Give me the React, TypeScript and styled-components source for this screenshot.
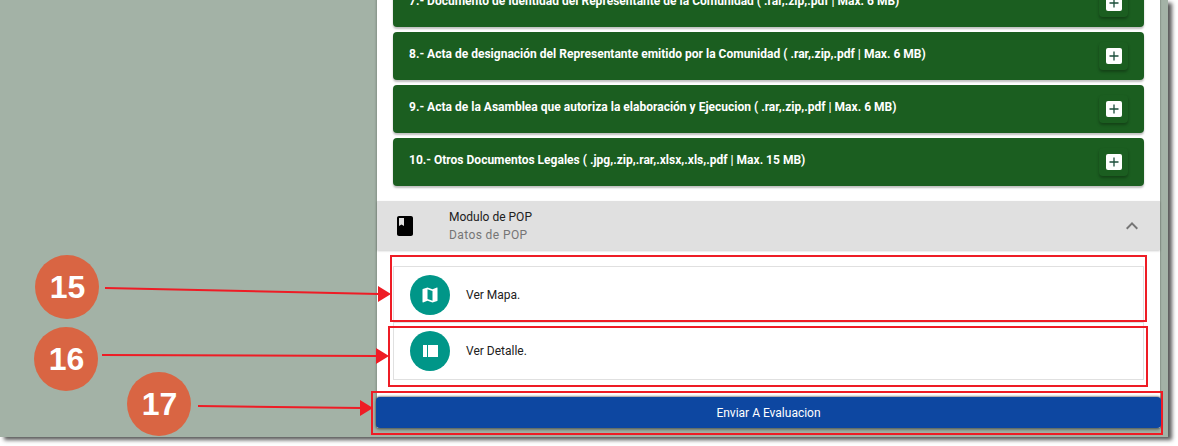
import React from 'react'
import styled, { createGlobalStyle } from 'styled-components'

const GlobalStyle = createGlobalStyle`
  html, body {
    margin: 0;
    padding: 0;
    background: #fff;
    overflow: hidden;
  }
  body { min-height: 446px; }
  * { box-sizing: border-box; }
`

const Shot = styled.div`
  position: relative;
  width: 1168px;
  height: 437px;
  padding: 0 8px 0 377px;
  background: #a3b2a6;
  box-shadow: 4px 3px 4px rgba(0, 0, 0, 0.65);
  overflow: hidden;
  font-family: Roboto, sans-serif;
`

const Panel = styled.div`
  width: 783px;
  background: #fff;
  box-shadow: -1px 0 2px rgba(0, 0, 0, 0.2), 1px 0 1px rgba(0, 0, 0, 0.12);
`

const Cards = styled.div`
  display: flex;
  flex-direction: column;
  gap: 5px;
  margin-top: -21px;
  padding: 0 16px 15px;
`

const Card = styled.div`
  display: flex;
  align-items: center;
  justify-content: space-between;
  height: 48px;
  padding: 0 16px;
  background: #1b5e20;
  border-radius: 4px;
  box-shadow: 0 2px 2px rgba(0, 0, 0, 0.25);
`

const CardTitle = styled.span`
  margin-top: -5px;
  color: #fff;
  font-size: 12px;
  font-weight: 700;
  line-height: 16px;
  letter-spacing: 0.01px;
`

const PlusButton = styled.button`
  display: flex;
  align-items: center;
  justify-content: center;
  width: 29px;
  height: 28px;
  padding: 0;
  border: 0;
  border-radius: 4px;
  background: #1b5e20;
  box-shadow: 0 2px 3px rgba(0, 0, 0, 0.3);
`

const PlusBox = styled.span`
  display: flex;
  align-items: center;
  justify-content: center;
  width: 16px;
  height: 16px;
  background: #fff;
  border-radius: 2px;
`

const ModuleHeader = styled.div`
  display: flex;
  align-items: center;
  height: 49px;
  padding: 0 16px;
  background: #e0e0e0;
  box-shadow: 0 1px 2px rgba(0, 0, 0, 0.2);
`

const ModuleIcon = styled.svg`
  flex: none;
  width: 24px;
  height: 24px;
  margin-right: 32px;
  fill: #000;
`

const ModuleText = styled.div`
  flex: 1;
  display: flex;
  flex-direction: column;
  gap: 3px;
`

const ModuleTitle = styled.span`
  margin-top: 1px;
  color: #212121;
  font-size: 12px;
  line-height: 16px;
`

const ModuleSub = styled.span`
  margin-top: -1px;
  color: #757575;
  font-size: 12px;
  line-height: 16px;
  letter-spacing: 0.4px;
`

const Chevron = styled.svg`
  flex: none;
  width: 24px;
  height: 24px;
  fill: #757575;
`

const List = styled.div`
  padding: 16px 16px 17px;
`

const Item = styled.div`
  display: flex;
  align-items: center;
  gap: 16px;
  height: 57px;
  padding: 0 16px;
  border: 1px solid #e0e0e0;
  & + & { margin-top: -1px; height: 58px; }
`

const ItemIcon = styled.span`
  display: flex;
  align-items: center;
  justify-content: center;
  width: 40px;
  height: 40px;
  border-radius: 50%;
  background: #009688;
`

const ItemLabel = styled.span`
  color: #212121;
  font-size: 12px;
`

const SendButton = styled.button`
  display: block;
  width: 785px;
  height: 31px;
  margin-left: -1px;
  border: 0;
  border-radius: 4px;
  background: #0d47a1;
  color: #fff;
  font-family: Roboto, sans-serif;
  font-size: 12px;
  font-weight: 400;
  box-shadow: 0 -1px 2px rgba(0, 0, 0, 0.4), 0 2px 3px rgba(0, 0, 0, 0.35);
`

const Marks = styled.svg`
  position: absolute;
  left: 0;
  top: 0;
  width: 1168px;
  height: 437px;
  pointer-events: none;
`

const Badge = styled.div<{ $x: number; $y: number }>`
  position: absolute;
  left: ${p => p.$x}px;
  top: ${p => p.$y}px;
  display: flex;
  align-items: center;
  justify-content: center;
  width: 64px;
  height: 64px;
  padding-left: 1px;
  border-radius: 50%;
  background: #d96543;
  color: #fff;
  font-family: 'Liberation Sans', Arial, sans-serif;
  font-size: 32px;
  font-weight: 700;
`

const documents = [
  '7.- Documento de Identidad del Representante de la Comunidad ( .rar,.zip,.pdf | Max. 6 MB)',
  '8.- Acta de designación del Representante emitido por la Comunidad ( .rar,.zip,.pdf | Max. 6 MB)',
  '9.- Acta de la Asamblea que autoriza la elaboración y Ejecucion ( .rar,.zip,.pdf | Max. 6 MB)',
  '10.- Otros Documentos Legales ( .jpg,.zip,.rar,.xlsx,.xls,.pdf | Max. 15 MB)',
]

const frames = [
  { x: 391, y: 256, w: 755, h: 65 },
  { x: 389, y: 327, w: 758, h: 59 },
  { x: 372, y: 392, w: 790, h: 42 },
]

const arrows = [
  { line: '105,288 379,294', head: '378,286 391,294 378,302' },
  { line: '102,355 377,356', head: '376,348 389,356 376,364' },
  { line: '198,406 361,408', head: '360,400 373,408 360,416' },
]

const App = () => {
  return (
    <>
      <GlobalStyle />
      <Shot>
        <Panel>
          <Cards>
            {documents.map(doc => (
              <Card key={doc}>
                <CardTitle>{doc}</CardTitle>
                <PlusButton>
                  <PlusBox>
                    <svg width="12" height="12" viewBox="0 0 12 12">
                      <path d="M6 1.5v9M1.5 6h9" stroke="#1b4d3a" strokeWidth="1.3" />
                    </svg>
                  </PlusBox>
                </PlusButton>
              </Card>
            ))}
          </Cards>
          <ModuleHeader>
            <ModuleIcon viewBox="0 0 24 24">
              <path d="M18 2H6c-1.1 0-2 .9-2 2v16c0 1.1.9 2 2 2h12c1.1 0 2-.9 2-2V4c0-1.1-.9-2-2-2zM6 4h5v8l-2.5-1.5L6 12V4z" />
            </ModuleIcon>
            <ModuleText>
              <ModuleTitle>Modulo de POP</ModuleTitle>
              <ModuleSub>Datos de POP</ModuleSub>
            </ModuleText>
            <Chevron viewBox="0 0 24 24">
              <path d="M12 8l-6 6 1.41 1.41L12 10.83l4.59 4.58L18 14z" />
            </Chevron>
          </ModuleHeader>
          <List>
            <Item>
              <ItemIcon>
                <svg width="20" height="20" viewBox="0 0 24 24" fill="#fff">
                  <path d="M20.5 3l-.16.03L15 5.1 9 3 3.36 4.9c-.21.07-.36.25-.36.48V20.5c0 .28.22.5.5.5l.16-.03L9 18.9l6 2.1 5.64-1.9c.21-.07.36-.25.36-.48V3.5c0-.28-.22-.5-.5-.5zM15 19l-6-2.11V5l6 2.11V19z" />
                </svg>
              </ItemIcon>
              <ItemLabel>Ver Mapa.</ItemLabel>
            </Item>
            <Item>
              <ItemIcon>
                <svg width="15" height="12" viewBox="0 0 15 12" fill="#fff">
                  <path d="M0 0h4v12H0zM5 0h10v12H5z" />
                </svg>
              </ItemIcon>
              <ItemLabel>Ver Detalle.</ItemLabel>
            </Item>
          </List>
          <SendButton>Enviar A Evaluacion</SendButton>
        </Panel>
        <Marks viewBox="0 0 1168 437">
          {frames.map(f => (
            <rect key={f.y} x={f.x} y={f.y} width={f.w} height={f.h} fill="none" stroke="#ee1c25" strokeWidth="2" />
          ))}
          {arrows.map(a => (
            <g key={a.line}>
              <polyline points={a.line} fill="none" stroke="#ee1c25" strokeWidth="2" />
              <polygon points={a.head} fill="#ee1c25" />
            </g>
          ))}
        </Marks>
        <Badge $x={35} $y={255}>15</Badge>
        <Badge $x={34} $y={327}>16</Badge>
        <Badge $x={127} $y={372}>17</Badge>
      </Shot>
    </>
  )
}

export default App
